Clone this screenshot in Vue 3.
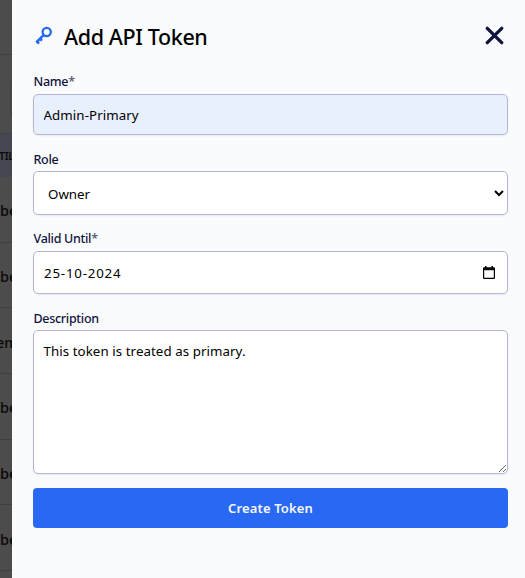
<template>
  <div class="page">
    <div class="backdrop">
      <div class="backdrop-top"></div>
      <div class="backdrop-toolbar">
        <div class="backdrop-search"></div>
      </div>
      <div class="backdrop-head"><span>TIL</span></div>
      <div v-for="(row, index) in rows" :key="index" class="backdrop-row">
        <span :class="{ wide: row === 'em' }">{{ row }}</span>
      </div>
    </div>

    <form class="drawer" @submit.prevent>
      <header class="drawer-header">
        <svg class="key-icon" viewBox="0 0 18 20" fill="none" stroke="#2868f0">
          <circle cx="11.700" cy="6" r="4.100" stroke-width="2.300" />
          <path d="M8.800 8.900L1.300 16.400M1.700 15.300l2.300 2.300M4.900 12.600l2.100 2.100" stroke-width="2.600" />
        </svg>
        <h1>Add API Token</h1>
        <button type="button" class="close-button" aria-label="Close">
          <svg viewBox="0 0 20 20" fill="none" stroke="#11133f" stroke-width="3.300" stroke-linecap="round">
            <path d="M2.300 2.300l14.400 14.400M16.700 2.300L2.300 16.700" />
          </svg>
        </button>
      </header>

      <label for="name">Name<span class="required">*</span></label>
      <input id="name" v-model="token.name" class="control name-input" type="text" />

      <label for="role" class="lower">Role</label>
      <select id="role" v-model="token.role" class="control role-select">
        <option>Owner</option>
        <option>Member</option>
      </select>

      <label for="valid">Valid Until<span class="required">*</span></label>
      <div class="control date-control">
        <input id="valid" v-model="token.validUntil" type="text" />
        <svg class="calendar-icon" viewBox="0 0 14 14">
          <path d="M3 0h1.500v1.200h5V0H11v1.200h1q1 0 1 1V12q0 1-1 1H2q-1 0-1-1V2.200q0-1 1-1h1zM2.200 4.300v7.500h9.600V4.300z" fill="#000" fill-rule="evenodd" />
        </svg>
      </div>

      <label for="description" class="lower">Description</label>
      <textarea id="description" v-model="token.description" class="control" spellcheck="false"></textarea>

      <button type="submit" class="submit-button">Create Token</button>
    </form>
  </div>
</template>

<script setup>
import { reactive } from "vue";

const token = reactive({
  name: "Admin-Primary",
  role: "Owner",
  validUntil: "25-10-2024",
  description: "This token is treated as primary.",
});

const rows = ["be", "be", "em", "be", "be", "be", ""];
</script>

<style>
body {
  margin: 0;
  overflow: hidden;
}
</style>

<style scoped>
.page,
.page * {
  box-sizing: border-box;
}

.page {
  display: flex;
  height: 578px;
  font-family: "Noto Sans", "Open Sans", sans-serif;
}

.backdrop {
  width: 12px;
  flex: none;
  overflow: hidden;
  background: #4c4c4c;
  color: #090909;
}

.backdrop-top {
  height: 55px;
  border-bottom: 1px solid #404041;
}

.backdrop-toolbar {
  height: 79px;
  padding: 23px 0 0 10px;
  border-bottom: 1px solid #414246;
}

.backdrop-search {
  width: 40px;
  height: 39px;
  border: 1px solid #404142;
  border-radius: 5px;
}

.backdrop-head {
  display: flex;
  align-items: center;
  height: 43px;
  background: #444750;
  font-size: 10.5px;
  font-weight: 600;
}

.backdrop-head span {
  margin-left: -1px;
  letter-spacing: -0.3px;
}

.backdrop-row {
  display: flex;
  align-items: center;
  height: 65.7px;
  padding-top: 2px;
  border-bottom: 1px solid #404041;
  font-size: 14.5px;
  font-weight: 500;
}

.backdrop-row .wide {
  margin-left: -4px;
}

.drawer {
  display: flex;
  flex: 1;
  flex-direction: column;
  padding: 0 17px 0 21px;
  background: #f9fbfd;
}

.drawer-header {
  display: flex;
  align-items: center;
  height: 73px;
}

.key-icon {
  width: 18px;
  height: 20px;
  margin: 0 0 2px 2px;
}

h1 {
  margin: 0 0 0 11px;
  color: #000;
  font-size: 21.5px;
  font-weight: 500;
  letter-spacing: -0.37px;
}

.close-button {
  width: 20px;
  height: 20px;
  margin: 0 3px 2px auto;
  padding: 0;
  border: none;
  background: none;
}

.close-button svg {
  display: block;
}

label {
  height: 21px;
  padding-left: 0.5px;
  color: #11133f;
  font-size: 12.5px;
  font-weight: 500;
  letter-spacing: -0.3px;
  line-height: 18px;
}

label.lower {
  line-height: 20px;
}

.required {
  color: #55576f;
}

.control {
  width: 100%;
  margin: 0 0 15px;
  border: 1px solid #b4b5d8;
  border-radius: 5px;
  outline: none;
  background: #fff;
  box-shadow: 0 1px 2px rgba(20, 20, 60, 0.07);
  color: #000;
  font-family: inherit;
  font-size: 13.3px;
}

.name-input {
  height: 41px;
  padding: 0 9.5px;
  background: #e8effd;
  letter-spacing: 0.08px;
}

.role-select {
  height: 44px;
  padding: 2px 2px 0 10px;
}

.date-control {
  display: flex;
  align-items: center;
  height: 43px;
  padding: 0 11px 0 10px;
}

.date-control input {
  flex: 1;
  padding: 1px 0 0;
  border: none;
  outline: none;
  background: none;
  font: inherit;
  letter-spacing: 0.8px;
}

.calendar-icon {
  width: 14px;
  height: 14px;
}

textarea.control {
  height: 144px;
  margin-bottom: 14px;
  padding: 11px 9.5px;
  letter-spacing: 0.07px;
  line-height: 19px;
}

.submit-button {
  height: 40px;
  padding: 0;
  border: none;
  border-radius: 4px;
  background: #2968f3;
  color: #f5f8ff;
  font-family: inherit;
  font-size: 13px;
  font-weight: 600;
  letter-spacing: 0.15px;
}
</style>
